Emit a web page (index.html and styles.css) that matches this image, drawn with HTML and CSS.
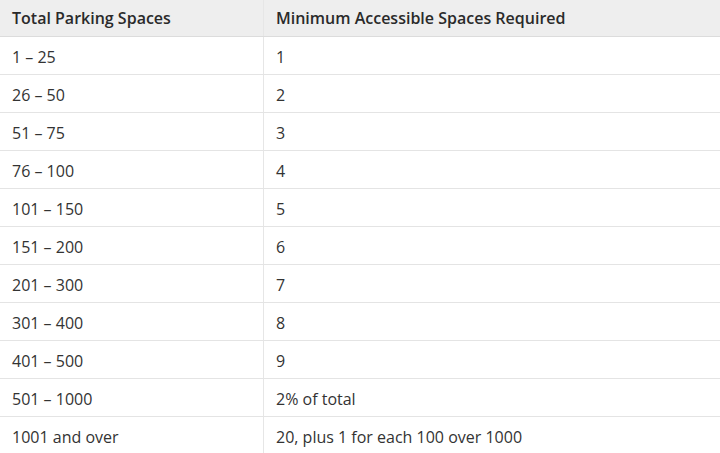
FILE: index.html
```html
<!DOCTYPE html>
<html>
<head>
<meta charset="utf-8">
<link rel="stylesheet" href="styles.css">
</head>
<body>
<table class="spaces">
  <thead>
    <tr><th>Total Parking Spaces</th><th>Minimum Accessible Spaces Required</th></tr>
  </thead>
  <tbody>
    <tr><td>1 – 25</td><td>1</td></tr>
    <tr><td>26 – 50</td><td>2</td></tr>
    <tr><td>51 – 75</td><td>3</td></tr>
    <tr><td>76 – 100</td><td>4</td></tr>
    <tr><td>101 – 150</td><td>5</td></tr>
    <tr><td>151 – 200</td><td>6</td></tr>
    <tr><td>201 – 300</td><td>7</td></tr>
    <tr><td>301 – 400</td><td>8</td></tr>
    <tr><td>401 – 500</td><td>9</td></tr>
    <tr><td>501 – 1000</td><td>2% of total</td></tr>
    <tr><td>1001 and over</td><td>20, plus 1 for each 100 over 1000</td></tr>
  </tbody>
</table>
</body>
</html>
```
FILE: styles.css
```css
html, body {
  margin: 0;
  padding: 0;
  background: #ffffff;
}
.spaces {
  width: 720px;
  border-collapse: collapse;
  table-layout: fixed;
  font-family: "Open Sans", "Noto Sans", sans-serif;
  font-size: 16px;
  line-height: 20px;
  color: #333333;
}
.spaces th, .spaces td {
  text-align: left;
  padding: 0 0 0 12px;
  white-space: nowrap;
}
.spaces th:first-child, .spaces td:first-child {
  width: 251px;
  border-right: 1px solid #e6e6e6;
}
.spaces th {
  height: 36px;
  background: #eeeeee;
  font-weight: 600;
  color: #2a2a2a;
  border-bottom: 1px solid #dcdcdc;
}
.spaces td {
  height: 35px;
  padding-top: 2px;
  border-bottom: 1px solid #e4e4e4;
}
```
